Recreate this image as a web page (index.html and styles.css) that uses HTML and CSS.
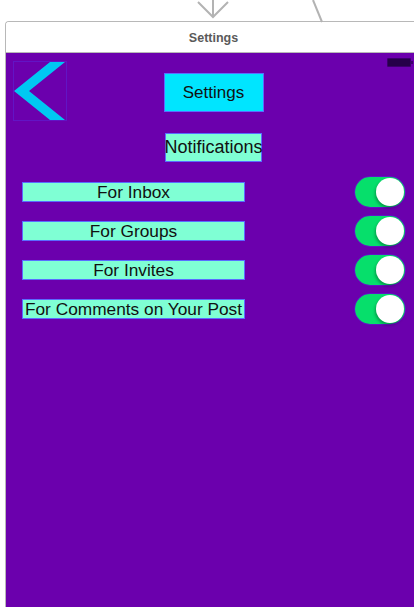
FILE: index.html
```html
<!DOCTYPE html>
<html>
<head>
<meta charset="utf-8">
<link rel="stylesheet" href="styles.css">
</head>
<body>
<svg class="connectors" width="414" height="24" viewBox="0 0 414 24">
  <path d="M213 0 V17 M198 2 L213 17 L228 2" fill="none" stroke="#b3b3b3" stroke-width="2"/>
  <path d="M313 0 L322 22" fill="none" stroke="#b3b3b3" stroke-width="2"/>
</svg>
<div class="frame">
  <div class="titlebar">Settings</div>
  <div class="screen">
    <div class="battery"><span class="nub"></span></div>
    <div class="header">
      <div class="back">
        <svg width="52" height="58" viewBox="0 0 52 58">
          <polygon points="51,0 36,0 0,29 36,58 51,58 15,29" fill="#00c8f2"/>
        </svg>
      </div>
      <div class="title-btn">Settings</div>
      <div></div>
    </div>
    <div class="section"><span class="notif">Notifications</span></div>
    <div class="rows">
      <div class="row"><div class="label">For Inbox</div><div class="switch"><span class="knob"></span></div></div>
      <div class="row"><div class="label">For Groups</div><div class="switch"><span class="knob"></span></div></div>
      <div class="row"><div class="label">For Invites</div><div class="switch"><span class="knob"></span></div></div>
      <div class="row"><div class="label">For Comments on Your Post</div><div class="switch"><span class="knob"></span></div></div>
    </div>
  </div>
</div>
</body>
</html>
```
FILE: styles.css
```css
html, body {
  margin: 0;
  padding: 0;
  background: #ffffff;
  width: 414px;
  height: 607px;
  overflow: hidden;
  font-family: "Liberation Sans", Arial, sans-serif;
}
.connectors {
  position: absolute;
  left: 0;
  top: 0;
  display: block;
}
.frame {
  margin-top: 21px;
  margin-left: 5px;
  width: 416px;
  height: 586px;
  border-left: 1px solid #b8b8b8;
  border-top: 1px solid #b8b8b8;
  border-top-left-radius: 4px;
  box-sizing: border-box;
  overflow: hidden;
  display: flex;
  flex-direction: column;
}
.titlebar {
  height: 31px;
  border-bottom: 1px solid #b8b8b8;
  box-sizing: border-box;
  display: flex;
  align-items: center;
  justify-content: center;
  font-weight: bold;
  font-size: 12.5px;
  color: #5a5a5a;
  background: #ffffff;
  padding-top: 1px;
}
.screen {
  flex: 1;
  background: #6b00ad;
  position: relative;
}
.battery {
  position: absolute;
  left: 381px;
  top: 5px;
  width: 24px;
  height: 9px;
  box-sizing: border-box;
  border: 1px solid #3c006c;
  background: #260048;
  border-radius: 1px;
}
.nub {
  position: absolute;
  right: -3px;
  top: 2px;
  width: 2px;
  height: 3px;
  background: #3c006c;
}
.header {
  display: grid;
  grid-template-columns: 1fr auto 1fr;
  align-items: start;
}
.back {
  margin-left: 8px;
  margin-top: 9px;
  width: 52px;
  height: 58px;
  outline: 1px solid rgba(80, 70, 255, 0.3);
}
.back svg { display: block; }
.title-btn {
  margin-top: 20px;
  width: 100px;
  height: 39px;
  box-sizing: border-box;
  border: 1px solid #5a6cff;
  background: #00e5ff;
  color: #111;
  font-size: 17px;
  display: flex;
  align-items: center;
  justify-content: center;
}
.section {
  display: flex;
  justify-content: center;
  margin-top: 13px;
}
.notif {
  width: 97px;
  height: 29px;
  box-sizing: border-box;
  border: 1px solid #5a6cff;
  background: #7fffd4;
  color: #111;
  font-size: 18px;
  display: flex;
  align-items: center;
  justify-content: center;
  white-space: nowrap;
}
.rows {
  margin-top: 15px;
  display: flex;
  flex-direction: column;
  gap: 9px;
  padding: 0 16px;
}
.row {
  display: flex;
  align-items: center;
  justify-content: space-between;
  height: 30px;
}
.label {
  width: 223px;
  height: 20px;
  box-sizing: border-box;
  border: 1px solid #5a6cff;
  background: #7fffd4;
  color: #111;
  font-size: 17.3px;
  line-height: 18px;
  text-align: center;
  white-space: nowrap;
  display: flex;
  justify-content: center;
}
.switch {
  width: 50px;
  height: 30px;
  border-radius: 15px;
  background: #06df6b;
  position: relative;
  outline: 1px solid rgba(80, 70, 255, 0.3);
}
.knob {
  position: absolute;
  right: 1px;
  top: 1px;
  width: 28px;
  height: 28px;
  border-radius: 50%;
  background: #ffffff;
  box-shadow: -1px 2px 3px rgba(0, 0, 0, 0.3);
}
```
